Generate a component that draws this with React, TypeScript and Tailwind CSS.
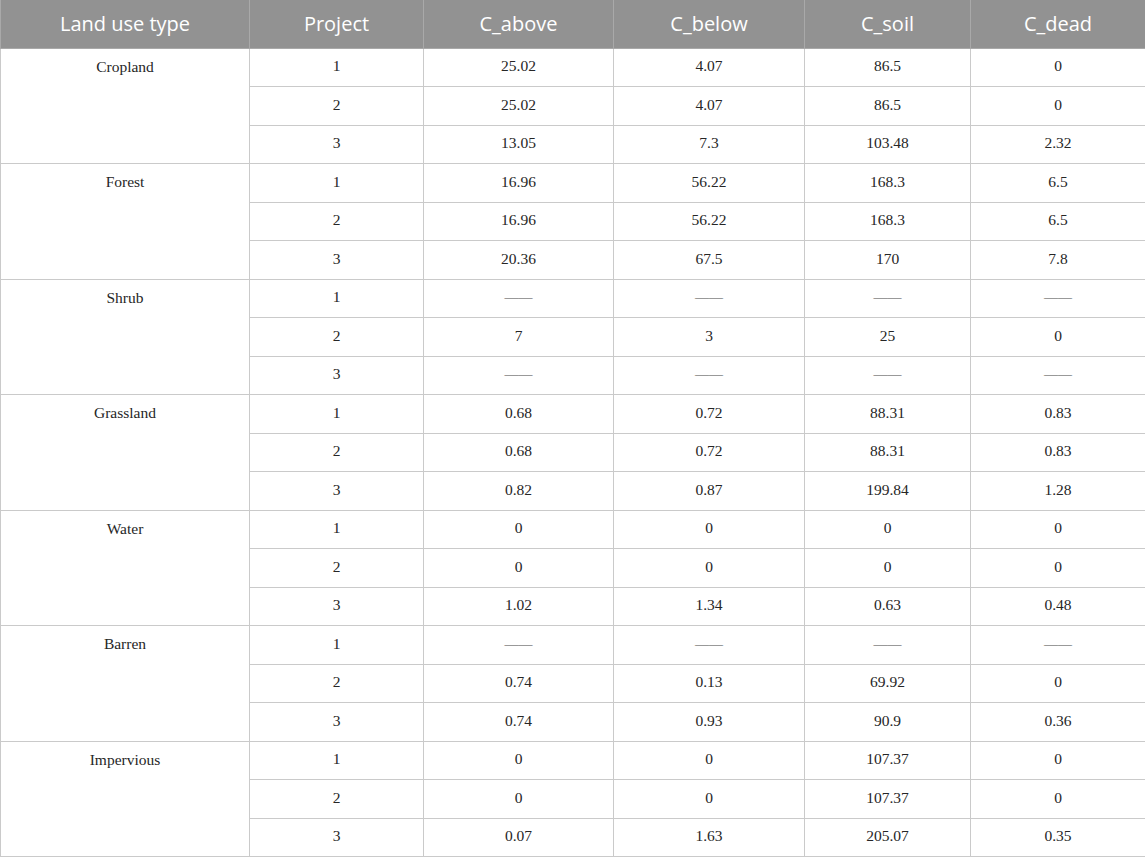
const headers = ["Land use type", "Project", "C_above", "C_below", "C_soil", "C_dead"];

const DASH = "——";

interface Group {
  type: string;
  rows: string[][];
}

const groups: Group[] = [
  { type: "Cropland", rows: [["1", "25.02", "4.07", "86.5", "0"], ["2", "25.02", "4.07", "86.5", "0"], ["3", "13.05", "7.3", "103.48", "2.32"]] },
  { type: "Forest", rows: [["1", "16.96", "56.22", "168.3", "6.5"], ["2", "16.96", "56.22", "168.3", "6.5"], ["3", "20.36", "67.5", "170", "7.8"]] },
  { type: "Shrub", rows: [["1", DASH, DASH, DASH, DASH], ["2", "7", "3", "25", "0"], ["3", DASH, DASH, DASH, DASH]] },
  { type: "Grassland", rows: [["1", "0.68", "0.72", "88.31", "0.83"], ["2", "0.68", "0.72", "88.31", "0.83"], ["3", "0.82", "0.87", "199.84", "1.28"]] },
  { type: "Water", rows: [["1", "0", "0", "0", "0"], ["2", "0", "0", "0", "0"], ["3", "1.02", "1.34", "0.63", "0.48"]] },
  { type: "Barren", rows: [["1", DASH, DASH, DASH, DASH], ["2", "0.74", "0.13", "69.92", "0"], ["3", "0.74", "0.93", "90.9", "0.36"]] },
  { type: "Impervious", rows: [["1", "0", "0", "107.37", "0"], ["2", "0", "0", "107.37", "0"], ["3", "0.07", "1.63", "205.07", "0.35"]] },
];

const widths = ["w-[249px]", "w-[174px]", "w-[190px]", "w-[191px]", "w-[166px]", "w-[175px]"];

export default function App() {
  return (
    <div className="w-[1145px] h-[857px] bg-white overflow-hidden">
      <table className="w-[1145px] table-fixed border-collapse font-['Liberation_Serif',serif] text-[15.5px] text-[#262626]">
        <colgroup>
          {widths.map((w, i) => (
            <col key={i} className={w} />
          ))}
        </colgroup>
        <thead>
          <tr className="h-[48px] bg-[#929292]">
            {headers.map((h) => (
              <th
                key={h}
                className="border border-[#a9a9a9] border-t-0 font-['Open_Sans',sans-serif] text-[20px] font-normal text-white text-center align-middle"
              >
                {h}
              </th>
            ))}
          </tr>
        </thead>
        <tbody>
          {groups.map((g) =>
            g.rows.map((r, ri) => (
              <tr key={g.type + ri} className="h-[38.5px]">
                {ri === 0 && (
                  <td rowSpan={3} className="border border-[#cacaca] text-center align-top pt-[6px]">
                    {g.type}
                  </td>
                )}
                {r.map((v, ci) => (
                  <td key={ci} className="border border-[#cacaca] text-center align-middle pb-[3px]">
                    {v === DASH ? <span className="text-[14px] text-[#4a4a4a]">{v}</span> : v}
                  </td>
                ))}
              </tr>
            ))
          )}
        </tbody>
      </table>
    </div>
  );
}
